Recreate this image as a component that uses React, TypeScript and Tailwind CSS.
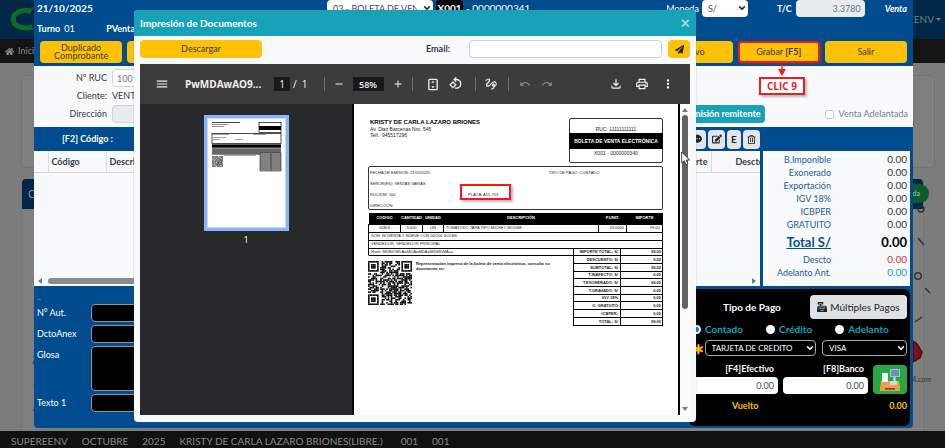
import React from "react";
import {
  FaCashRegister,
  FaCommentDots,
  FaEdit,
  FaHome,
  FaPaperPlane,
  FaRegTrashAlt,
} from "react-icons/fa";
import {
  MdAdd,
  MdMenu,
  MdMoreVert,
  MdOutlineFileDownload,
  MdOutlinePrint,
  MdRedo,
  MdRemove,
  MdUndo,
} from "react-icons/md";

const actions = [
  "Duplicado Comprobante",
  "Nuevo",
  "Guías",
  "Pedidos",
  "Clientes",
  "Productos",
  "Reportes",
  "Nuevo",
];

const summary = [
  ["B.Imponible", "0.00"],
  ["Exonerado", "0.00"],
  ["Exportación", "0.00"],
  ["IGV 18%", "0.00"],
  ["ICBPER", "0.00"],
  ["GRATUITO", "0.00"],
];

const receiptTotals = [
  ["IMPORTE TOTAL: S/", "99.00"],
  ["DESCUENTO: S/", "0.00"],
  ["SUBTOTAL: S/", "99.00"],
  ["T.INAFECTO: S/", "0.00"],
  ["T.EXONERADO: S/", "99.00"],
  ["T.GRAVADO: S/", "0.00"],
  ["IGV 18%", "0.00"],
  ["O. GRATUITO", "0.00"],
  ["ICBPER:", "0.00"],
  ["TOTAL: S/", "99.00"],
];

function Chevron({ className }: { className: string }) {
  return (
    <svg viewBox="0 0 10 10" className={className} fill="none" stroke="currentColor" strokeWidth="2">
      <path d="M1.5 3 5 6.5 8.5 3" />
    </svg>
  );
}

function PickList({
  id,
  label,
  value,
  dark,
  className,
}: {
  id: string;
  label: string;
  value: string;
  dark?: boolean;
  className: string;
}) {
  return (
    <div className={`relative ${className}`}>
      <select
        id={id}
        aria-label={label}
        defaultValue={value}
        className={
          dark
            ? "block h-4 w-full appearance-none rounded border border-[#a5a9ad] bg-black pr-3 pl-1.5 text-[8px] text-white"
            : "block h-[17px] w-full appearance-none rounded-sm bg-white pr-4 pl-1.5 text-[9px] text-[#495057]"
        }
      >
        <option>{value}</option>
      </select>
      <Chevron
        className={
          dark
            ? "pointer-events-none absolute top-1 right-0.5 size-2 text-white"
            : "pointer-events-none absolute top-1 right-0.5 size-2 text-[#222]"
        }
      />
    </div>
  );
}

function isDark(x: number, y: number) {
  const finder = (fx: number, fy: number) => {
    const d = Math.max(Math.abs(x - fx - 3), Math.abs(y - fy - 3));
    return d <= 4 ? (d === 3 || d <= 1 ? 1 : 0) : -1;
  };
  for (const [fx, fy] of [
    [0, 0],
    [22, 0],
    [0, 22],
  ]) {
    const hit = finder(fx, fy);
    if (hit >= 0) return hit === 1;
  }
  return ((x * 73 + y * 151 + x * y * 37 + ((x * x * 5) ^ (y * y * 11))) % 17) > 7;
}

function QrCells() {
  const cells: React.ReactNode[] = [];
  for (let y = 0; y < 29; y++)
    for (let x = 0; x < 29; x++)
      if (isDark(x, y)) cells.push(<rect key={`${x}-${y}`} x={x} y={y} width="1.05" height="1.05" />);
  return <>{cells}</>;
}

function SiteBackdrop() {
  return (
    <>
      <header className="flex h-[39px] items-center justify-between bg-[#002648] pr-1 pl-2.5">
        <svg viewBox="0 0 40 30" className="h-[26px] w-9" fill="none">
          <path d="M24 5C12 1 3 8 3 14s8 13 22 9" stroke="#0c6b26" strokeWidth="6" />
          <path d="M23 0l5 6 8-6z" fill="#8b1118" />
        </svg>
        <span className="flex items-center gap-0.5 text-[10px] text-[#6b7f92]">
          SUPEREENV
          <svg viewBox="0 0 8 5" className="h-[3px] w-[5px]" fill="currentColor">
            <path d="M0 0h8L4 5z" />
          </svg>
        </span>
      </header>
      <nav className="flex h-6 items-center bg-[#141414] pl-[5px] text-[9px] text-[#8b8b8b]">
        <a href="#inicio" className="flex items-center gap-1">
          <FaHome className="size-[9px]" />
          Inicio
        </a>
      </nav>
      <main className="flex-1 px-[21px] pt-3">
        <section className="mr-[-11px] flex h-[93px] items-center justify-end rounded border border-[#737373] bg-[#7f7f7f] pr-5 text-[13px] font-bold text-[#333]">
          s
        </section>
        <section className="mt-[11px] flex h-[252px] flex-col border-x border-[#757575] bg-[#7f7f7f]">
          <div className="flex h-[30px] items-center rounded-t bg-[#00264a] pl-1.5 text-[11px] text-[#7e8f9f]">
            C
          </div>
          <div className="flex flex-1 justify-between">
            <span className="rotate-180 self-end pr-[9px] pt-5 text-[9px] leading-3 font-bold text-[#333] [writing-mode:vertical-rl]">
              Importe en S/
            </span>
          </div>
        </section>
      </main>
      <div className="absolute top-[184px] right-4 flex h-[19px] w-14 items-center justify-end rounded-full bg-[#0a5c2c] pr-[9px] text-[7px] font-bold text-[#93a899]">
        Ayuda
      </div>
      <svg
        viewBox="0 0 32 180"
        className="absolute top-[203px] right-0 h-[180px] w-8"
        fill="none"
        stroke="#2d2d2d"
        strokeWidth="1.4"
      >
        <circle cx="8" cy="6" r="3" />
        <path d="M5 35l6 7" />
        <circle cx="5" cy="73" r="3.2" />
        <path d="M12 85l5 5M2 119l7-5" />
        <path d="M0 138l4 3 5 8-2 6-7 4z" fill="#7b1216" stroke="#4b0a0c" />
      </svg>
      <span className="absolute top-[374px] right-3.5 text-[7px] text-[#333]">4.com</span>
      <footer className="flex h-[21px] items-center gap-3.5 bg-[#111] pl-[11px] text-[10px] text-[#8a8a8a]">
        <span>SUPEREENV</span>
        <span>OCTUBRE</span>
        <span>2025</span>
        <span>KRISTY DE CARLA LAZARO BRIONES(LIBRE.)</span>
        <span className="ml-1">001</span>
        <span>001</span>
      </footer>
    </>
  );
}

function PosTop() {
  return (
    <div className="px-[3px] text-[9px] text-white">
      <div className="flex h-[17px] items-center">
        <strong className="w-[290px] text-[10px]">21/10/2025</strong>
        <PickList id="documento" label="Tipo de documento" value="03 - BOLETA DE VENTA" className="w-[106px]" />
        <span className="ml-[3px] w-[27px] rounded-sm bg-black text-center text-[10px] leading-[17px] font-bold">
          X001
        </span>
        <span className="ml-[3px] text-[10px]">- 0000000341</span>
        <label htmlFor="moneda" className="ml-auto pr-[3px]">
          Moneda
        </label>
        <PickList id="moneda" label="Moneda" value="S/" className="w-[46px]" />
        <label htmlFor="tc" className="ml-[29px] font-bold">
          T/C
        </label>
        <input
          id="tc"
          readOnly
          value="3.3780"
          className="ml-1 h-[17px] w-[69px] rounded-sm bg-[#e9ecef] pr-1 text-right text-[#6c757d]"
        />
        <strong className="ml-5 pr-[3px] italic">Venta</strong>
      </div>
      <div className="flex h-6 items-center gap-1">
        <strong>Turno</strong>
        <span className="w-[38px]">01</span>
        <strong>PVenta</strong>
      </div>
      <div className="grid grid-cols-10 gap-[5px] px-[3px] pb-[3px] text-[#3b3b2c]">
        {actions.map((name, i) => (
          <button key={i} className="h-[22px] rounded bg-[#ffc107] px-3 leading-2">
            {name}
          </button>
        ))}
        <button className="h-[22px] rounded-sm border-2 border-[#f01b1b] bg-[#ffc107] shadow-[2px_2px_2px_#3a4b66]">
          Grabar <b>[F5]</b>
        </button>
        <button className="h-[22px] rounded bg-[#ffc107]">Salir</button>
      </div>
    </div>
  );
}

function PosCustomer() {
  return (
    <div className="flex h-[61px] items-end justify-between bg-[#f8f9fa] pt-[3px] pr-[5px] pb-1 text-[9px] text-[#343a40]">
      <div className="grid w-[300px] grid-cols-[73px_1fr] items-center gap-x-[5px]">
        <label htmlFor="ruc" className="text-right">
          Nº RUC
        </label>
        <input
          id="ruc"
          defaultValue="100"
          className="h-[18px] rounded border border-[#ced4da] bg-white pl-1 text-[#6c757d]"
        />
        <span className="text-right leading-[18px]">Cliente:</span>
        <span className="leading-[18px]">VENTAS VARIAS</span>
        <label htmlFor="dir" className="text-right">
          Dirección
        </label>
        <input id="dir" readOnly className="h-[18px] rounded border border-[#ced4da] bg-[#e9ecef]" />
      </div>
      <div className="flex items-center">
        <button className="mr-[60px] h-[18px] rounded-sm bg-[#17a2b8] px-1 font-bold text-white">
          Guía de emisión remitente
        </button>
        <input id="adel" type="checkbox" className="size-[9px] appearance-none rounded-xs border border-[#c9cdd1] bg-white" />
        <label htmlFor="adel" className="pl-[5px] text-[#7b8187]">
          Venta Adelantada
        </label>
      </div>
    </div>
  );
}

function PosItems() {
  const tool = "flex h-[19px] items-center justify-center rounded bg-[#e2e6ea] text-[10px] text-[#212529]";
  return (
    <>
      <div className="flex h-6 items-center justify-between pl-7 text-[9px] font-bold text-white">
        <span>[F2] Código :</span>
        <div className="mr-[153px] flex gap-0.5">
          <button aria-label="Comentario" className={`${tool} w-[27px] pl-2`}>
            <FaCommentDots />
          </button>
          <button aria-label="Editar" className={`${tool} w-[17px]`}>
            <FaEdit />
          </button>
          <button className={`${tool} w-[14px]`}>E</button>
          <button aria-label="Eliminar" className={`${tool} w-[17px]`}>
            <FaRegTrashAlt className="size-[9px]" />
          </button>
        </div>
      </div>
      <div className="flex gap-[3px] pr-[3px]">
        <div className="flex h-[135px] min-w-0 flex-1 flex-col justify-between overflow-hidden bg-[#f8f9fa]">
          <table className="w-full table-fixed text-left text-[9px] font-bold text-[#343a40]">
            <thead>
              <tr className="h-[21px] border-b border-[#d9dcdf]">
                <th className="w-3.5" />
                <th className="w-[58px] border-x border-[#d9dcdf] pl-[3px]">Código</th>
                <th className="pl-[3px]">Descripción</th>
                <th className="w-16 border-r border-[#d9dcdf] pr-[3px] text-right">Importe</th>
                <th className="w-[49px] overflow-hidden pl-6">Descto</th>
              </tr>
            </thead>
          </table>
          <div className="flex h-2.5 items-center gap-1.5 px-1 text-[#777]">
            <svg viewBox="0 0 4 6" className="h-1.5 w-1" fill="currentColor">
              <path d="M4 0v6L0 3z" />
            </svg>
            <div className="h-1.5 w-[480px] rounded-full bg-[#8b8b8b]" />
            <svg viewBox="0 0 4 6" className="ml-auto h-1.5 w-1" fill="currentColor">
              <path d="M0 0v6l4-3z" />
            </svg>
          </div>
        </div>
        <div className="w-[147px] bg-[#f8f9fa] pt-0.5 pr-[3px] pl-2.5 text-[9px]">
          <table className="w-full">
            <tbody>
              {summary.map(([name, amount]) => (
                <tr key={name} className="leading-[13px]">
                  <th className="w-[58px] text-right font-normal text-[#1c5c9b]">{name}</th>
                  <td className="text-right text-[10px] leading-[13px] text-[#343a40]">{amount}</td>
                </tr>
              ))}
              <tr className="text-[13px] leading-[22px] font-bold">
                <th className="text-right text-[#0a4f90] underline">Total S/</th>
                <td className="text-right text-black">0.00</td>
              </tr>
              <tr className="leading-[13px]">
                <th className="text-right font-normal text-[#1c5c9b]">Descto</th>
                <td className="text-right text-[10px] leading-[13px] text-[#dc3545]">0.00</td>
              </tr>
              <tr className="leading-[13px]">
                <th className="text-right font-normal whitespace-nowrap text-[#1c5c9b]">Adelanto Ant.</th>
                <td className="text-right text-[10px] leading-[13px] text-[#17a2b8]">0.00</td>
              </tr>
            </tbody>
          </table>
        </div>
      </div>
    </>
  );
}

function RegisterIcon() {
  return (
    <svg viewBox="0 0 24 24" className="size-6">
      <path d="M3 13h18l1 9H2z" fill="#f0a04b" />
      <rect x="2" y="18" width="20" height="5" fill="#e8a04a" />
      <rect x="7" y="20" width="10" height="1.6" fill="#a3262a" />
      <rect x="12" y="1" width="10" height="8" fill="#a9bcd3" />
      <rect x="13" y="2" width="8" height="6" fill="#6f8fc2" />
      <rect x="15.500" y="9" width="2" height="4" fill="#d7dee6" />
      <rect x="4" y="5" width="6" height="9" fill="#f3f6f8" />
      <rect x="12" y="13" width="7" height="4" fill="#c3e2c7" />
    </svg>
  );
}

function PosPayment() {
  const amount = "block h-[17px] w-full rounded-sm bg-white pr-1 text-right text-[9px] text-[#495057]";
  return (
    <div className="flex items-start justify-between pt-[3px] pr-[3px] pb-0.5">
      <div className="grid w-[300px] grid-cols-[54px_1fr] gap-y-[3px] pl-[3px] text-[9px] text-white">
        <span className="col-span-2 h-3 leading-3 text-[#3bc44b]">_</span>
        <label htmlFor="aut" className="leading-[18px]">
          N° Aut.
        </label>
        <input id="aut" className="h-[18px] rounded border border-[#8e979f] bg-black" />
        <label htmlFor="anex" className="leading-[18px]">
          DctoAnex
        </label>
        <input id="anex" className="h-[18px] rounded border border-[#8e979f] bg-black" />
        <label htmlFor="glosa" className="leading-[18px]">
          Glosa
        </label>
        <textarea id="glosa" className="block h-[45px] resize-none rounded border border-[#8e979f] bg-black" />
        <label htmlFor="texto" className="leading-[18px]">
          Texto 1
        </label>
        <input id="texto" className="h-[18px] rounded border border-[#8e979f] bg-black" />
      </div>
      <div className="w-[221px] rounded-md bg-black px-[3px] pt-1.5 pb-3 text-[9px] text-white">
        <div className="flex h-6 items-center justify-between">
          <strong className="pl-[31px] text-[10px]">Tipo de Pago</strong>
          <button className="flex h-6 w-[97px] items-center justify-center gap-[3px] rounded-sm bg-[#dee2e6] text-[10px] whitespace-nowrap text-[#212529]">
            <FaCashRegister className="size-2.5 shrink-0" />
            Múltiples Pagos
          </button>
        </div>
        <div className="flex h-[21px] items-center gap-[23px] text-[10px] font-bold text-[#17a2b8]">
          {["Contado", "Crédito", "Adelanto"].map((name, i) => (
            <label key={name} className="flex items-center gap-1">
              <input
                type="radio"
                name="pago"
                defaultChecked={i === 0}
                className="size-[9px] appearance-none rounded-full bg-white checked:border-2 checked:border-white checked:bg-[#0d6efd]"
              />
              {name}
            </label>
          ))}
        </div>
        <div className="flex items-center justify-between">
          <span className="w-2.5 text-[15px] leading-4 font-bold text-[#ffc107]">∗</span>
          <PickList id="medio" label="Medio de pago" value="TARJETA DE CREDITO" dark className="w-[111px]" />
          <PickList id="tarjeta" label="Tarjeta" value="VISA" dark className="ml-1 w-[85px]" />
        </div>
        <div className="flex items-end gap-[5px] pt-1">
          <div className="flex-1">
            <label htmlFor="efectivo" className="block pr-1 text-right leading-[17px] font-bold">
              [F4]Efectivo
            </label>
            <input id="efectivo" defaultValue="0.00" className={amount} />
          </div>
          <div className="w-[85px]">
            <label htmlFor="banco" className="block pr-1 text-right leading-[17px] font-bold">
              [F8]Banco
            </label>
            <input id="banco" defaultValue="0.00" className={amount} />
          </div>
          <button aria-label="Cobrar" className="flex h-[29px] w-[34px] items-center justify-center rounded-sm bg-[#28a745]">
            <RegisterIcon />
          </button>
        </div>
        <div className="flex justify-between pt-1 pl-10 leading-4 font-bold text-[#ffc107]">
          <span>Vuelto</span>
          <span>0.00</span>
        </div>
      </div>
    </div>
  );
}

function Thumbnail() {
  return (
    <svg viewBox="0 0 77 108" className="h-[108px] w-[77px] bg-white">
      <g fill="#444">
        <rect x="4" y="3" width="28" height="1" />
        <rect x="4" y="5" width="16" height=".6" />
        <rect x="4" y="7" width="12" height=".6" />
        <rect x="5" y="15.500" width="16" height=".5" />
        <rect x="5" y="18.500" width="13" height=".5" />
        <rect x="5" y="20.500" width="7" height=".5" />
        <rect x="27" y="20.500" width="8" height=".5" />
        <rect x="45" y="15.500" width="13" height=".5" />
        <rect x="16" y="36.500" width="32" height=".5" />
      </g>
      <g fill="none" stroke="#222" strokeWidth=".8">
        <rect x="51" y="3.500" width="22" height="10" />
        <rect x="4" y="14.500" width="69" height="10" />
      </g>
      <rect x="51" y="7" width="22" height="4" />
      <rect x="4" y="25.500" width="69" height="10" fill="#8a8a8a" />
      <rect x="4" y="25.500" width="69" height="3" />
      <path d="M4 31h69M4 33h69M4 35h69" stroke="#222" strokeWidth=".7" />
      <rect x="52" y="34" width="21" height="18" fill="#aaa" />
      <path
        d="M52 34v18h21V34zM63 34v18M52 36h21M52 38h21M52 40h21M52 42h21M52 44h21M52 46h21M52 48h21M52 50h21"
        stroke="#222"
        strokeWidth=".6"
        fill="none"
      />
      <g transform="translate(4 37) scale(.38)">
        <QrCells />
      </g>
    </svg>
  );
}

function Receipt() {
  const cell = "border border-black px-0.5";
  return (
    <div className="min-w-0 flex-1 border-x-2 border-black bg-white pt-3.5 pr-[15px] pl-3.5 font-['Liberation_Sans',Arial,sans-serif] text-[4px] text-[#222]">
      <div className="flex justify-between">
        <div className="pl-0.5 text-[5px] leading-[6px]">
          <h2 className="text-[6px] leading-[8px] font-bold whitespace-nowrap text-black">
            KRISTY DE CARLA LAZARO BRIONES
          </h2>
          <p>Av. Diaz Barcenas Nro. 545</p>
          <p>Telf.: 945517296</p>
        </div>
        <div className="h-[45px] w-[94px] rounded-xs border border-[#333] text-center text-[5px]">
          <p className="pt-1.5 leading-2">RUC: 11111111111</p>
          <p className="-mx-px bg-black text-[5px] leading-4 font-bold whitespace-nowrap text-white">
            BOLETA DE VENTA ELECTRÓNICA
          </p>
          <p className="leading-2">X001 - 0000000340</p>
        </div>
      </div>
      <div className="mt-[3px] grid h-11 grid-cols-[98px_81px_1fr] rounded-xs border border-[#333] px-px leading-[11px]">
        <div>
          <p>FECHA DE EMISIÓN: 21/10/2025</p>
          <p>SEÑOR(ES): VENTAS VARIAS</p>
          <p>RUC/DNI: 100</p>
          <p>DIRECCIÓN:</p>
        </div>
        <p className="pt-[22px]">PLACA: A15-753</p>
        <p>TIPO DE PAGO: CONTADO</p>
      </div>
      <table className="mt-[3px] w-full table-fixed border-collapse text-[4px] leading-[6px]">
        <thead>
          <tr className="h-[11px] bg-black text-white">
            <th className="w-8">CODIGO</th>
            <th className="w-[22px]">CANTIDAD</th>
            <th className="w-[21px]">UNIDAD</th>
            <th>DESCRIPCIÓN</th>
            <th className="w-7">P.UNIT.</th>
            <th className="w-9">IMPORTE</th>
          </tr>
        </thead>
        <tbody>
          <tr className="h-2 text-center">
            <td className={cell}>00803</td>
            <td className={cell}>3.000</td>
            <td className={cell}>UN</td>
            <td className={`${cell} text-left`}>TOMATODO TAPA TIPO MICKEY MOUSE</td>
            <td className={`${cell} text-right`}>33.0000</td>
            <td className={`${cell} text-right`}>99.00</td>
          </tr>
          <tr className="h-2">
            <td colSpan={6} className={cell}>
              SON: NOVENTA Y NUEVE CON 00/100 SOLES
            </td>
          </tr>
          <tr className="h-2">
            <td colSpan={6} className={cell}>
              VENDEDOR: VENDEDOR PRINCIPAL
            </td>
          </tr>
        </tbody>
      </table>
      <div className="flex justify-between">
        <div className="flex-1">
          <p className="h-[7px] rounded-bl-xs border-b border-l border-black pl-0.5 leading-[6px]">
            Hash: MDNiYMDAwMDAwMDAwMDMDMA==
          </p>
          <div className="flex gap-1 pt-[5px]">
            <svg viewBox="0 0 29 29" className="size-11 shrink-0">
              <QrCells />
            </svg>
            <p className="w-[144px] leading-[5px] font-bold">
              Representación impresa de la boleta de venta electrónica, consulta su documento en:
            </p>
          </div>
        </div>
        <table className="-mt-px h-[78px] w-[90px] table-fixed border-collapse text-right text-[4px] leading-[5px] font-bold">
          <tbody>
            {receiptTotals.map(([name, amount]) => (
              <tr key={name}>
                <th className="w-[47px] border border-black pr-0.5 whitespace-nowrap">{name}</th>
                <td className="border border-black pr-px">{amount}</td>
              </tr>
            ))}
          </tbody>
        </table>
      </div>
    </div>
  );
}

function PdfToolbar() {
  const rule = "h-3.5 w-px bg-[#6a6a6a]";
  return (
    <div className="flex h-10 items-center bg-[#3c3c3c] px-[15px] font-['Open_Sans','Noto_Sans',sans-serif] text-[10px] text-[#f1f1f1]">
      <button aria-label="Menú">
        <MdMenu className="size-3.5" />
      </button>
      <strong className="w-[105px] shrink-0 pl-4 whitespace-nowrap">PwMDAwAO9...</strong>
      <input aria-label="Página" defaultValue="1" className="h-3.5 w-4 bg-[#191919] text-center" />
      <span className="pl-[3px]">/&nbsp; 1</span>
      <i className={`ml-4 ${rule}`} />
      <button aria-label="Alejar" className="ml-2">
        <MdRemove className="size-3" />
      </button>
      <input aria-label="Zoom" defaultValue="58%" className="mx-2 h-3.5 w-[31px] bg-[#191919] text-center text-[9px] font-semibold" />
      <button aria-label="Acercar">
        <MdAdd className="size-3" />
      </button>
      <i className={`ml-2 ${rule}`} />
      <button aria-label="Ajustar a la página" className="ml-3.5">
        <svg viewBox="0 0 12 14" className="h-[13px] w-3" fill="none" stroke="currentColor" strokeWidth="1.4">
          <rect x="1.500" y="1.500" width="9" height="11" rx="1" />
          <path d="M6 3l-1.800 2h3.600zM6 11l-1.800-2h3.600z" fill="currentColor" stroke="none" />
        </svg>
      </button>
      <button aria-label="Girar" className="ml-2.5">
        <svg viewBox="0 0 14 14" className="size-3.5" fill="none" stroke="currentColor" strokeWidth="1.3">
          <path d="M5.500 2.500H8a4.300 4.300 0 1 1-2 8.300" />
          <path d="M7.300.5L5.200 2.500l2.100 2M4 5l2.800 2.800L4 10.600 1.200 7.800z" />
        </svg>
      </button>
      <i className={`ml-3 ${rule}`} />
      <button aria-label="Dibujar" className="ml-2">
        <svg viewBox="0 0 14 14" className="size-3.5" fill="none" stroke="currentColor" strokeWidth="1.200" strokeLinecap="round">
          <path d="M2 3.500C3.500 1.500 6 1.500 5.500 3.500 5 5.500 2 6.500 2.500 8.500c.5 1.500 3 .5 4.500-1.500s4-3 5-1-1.500 4-3 3 .5-3 1-1-.5 4-2.500 4" />
        </svg>
      </button>
      <i className={`ml-2.5 ${rule}`} />
      <button aria-label="Deshacer" disabled className="ml-2.5 text-[#7c7c7c]">
        <MdUndo className="size-3" />
      </button>
      <button aria-label="Rehacer" disabled className="ml-2.5 text-[#7c7c7c]">
        <MdRedo className="size-3" />
      </button>
      <button aria-label="Descargar PDF" className="ml-auto">
        <MdOutlineFileDownload className="size-3.5" />
      </button>
      <button aria-label="Imprimir" className="ml-3">
        <MdOutlinePrint className="size-3.5" />
      </button>
      <button aria-label="Más acciones" className="ml-3">
        <MdMoreVert className="size-3.5" />
      </button>
    </div>
  );
}

function PrintDialog() {
  return (
    <section
      role="dialog"
      aria-label="Impresión de Documentos"
      className="absolute top-2.5 right-[249px] left-[134px] rounded-sm bg-[#f8f9fa] pb-[7px] shadow-[0_0_1px_#555]"
    >
      <div className="flex h-[26px] items-center justify-between rounded-t-sm bg-[#17a2b8] pr-1.5 pl-1.5 text-white">
        <h1 className="text-[10px] font-bold">Impresión de Documentos</h1>
        <button aria-label="Cerrar" className="text-[17px] leading-4 font-bold text-[#a9dbe3]">
          ×
        </button>
      </div>
      <div className="flex h-7 items-center px-1.5 pb-1.5 pt-1 text-[9px] text-[#343a40]">
        <button className="h-[18px] w-[122px] rounded-sm bg-[#ffc107]">Descargar</button>
        <label htmlFor="email" className="ml-auto pr-[19px] font-bold">
          Email:
        </label>
        <input id="email" type="email" className="h-[18px] w-[193px] rounded border border-[#ced4da] bg-white" />
        <button
          aria-label="Enviar"
          className="ml-1.5 flex h-[18px] w-[22px] items-center justify-center rounded-sm bg-[#ffc107] text-[#212529]"
        >
          <FaPaperPlane className="size-[9px]" />
        </button>
      </div>
      <div className="mx-1.5">
        <PdfToolbar />
        <div className="flex h-[311px]">
          <div className="flex w-[212px] shrink-0 flex-col items-center bg-[#28292b] pt-[11px] font-['Open_Sans','Noto_Sans',sans-serif] text-[9px] text-white">
            <div className="border-[3px] border-[#8ab4f8] bg-[#c3d8fb] p-px">
              <Thumbnail />
            </div>
            <span className="pt-[3px] leading-3">1</span>
          </div>
          <Receipt />
          <div className="flex w-2.5 shrink-0 flex-col items-center bg-[#fcfcfc] py-1 text-[#777]">
            <svg viewBox="0 0 6 4" className="h-1 w-1.5" fill="currentColor">
              <path d="M0 4h6L3 0z" />
            </svg>
            <div className="mt-[3px] h-[194px] w-1.5 rounded-full bg-[#636363]" />
            <svg viewBox="0 0 6 4" className="mt-auto h-1 w-1.5" fill="currentColor">
              <path d="M0 0h6L3 4z" />
            </svg>
          </div>
        </div>
      </div>
    </section>
  );
}

function Callouts() {
  return (
    <>
      <div className="absolute top-[184px] left-[460px] h-4 w-[51px] border-2 border-[#f01b1b] shadow-[2px_2px_2px_#bbb]" />
      <div className="absolute top-[63px] right-[140px] flex w-[46px] flex-col items-center">
        <svg viewBox="0 0 8 14" className="h-3.5 w-2" fill="#f01b1b">
          <path d="M3.300 0h1.400v6H8l-4 7-4-7h3.300z" />
        </svg>
        <span className="w-full border-2 border-[#f01b1b] bg-white text-center font-['Open_Sans',sans-serif] text-[10px] leading-[14px] font-bold whitespace-nowrap text-[#f01b1b] shadow-[2px_2px_2px_#bbb]">
          CLIC 9
        </span>
      </div>
      <svg viewBox="0 0 10 15" className="absolute top-[151px] left-[681px] h-[15px] w-2.5">
        <path d="M.7 1v11l2.600-2.300 1.700 4 1.900-.8-1.700-3.900h3.500z" fill="#fff" stroke="#333" strokeWidth=".9" />
      </svg>
    </>
  );
}

export default function App() {
  return (
    <div className="relative flex min-h-screen flex-col overflow-hidden bg-[#7c7c7c] font-[Lato,'Noto_Sans',sans-serif]">
      <SiteBackdrop />
      <section className="absolute top-0 right-8 left-[34px] rounded-b-sm bg-[#004c8f]">
        <PosTop />
        <PosCustomer />
        <PosItems />
        <PosPayment />
      </section>
      <PrintDialog />
      <Callouts />
    </div>
  );
}
